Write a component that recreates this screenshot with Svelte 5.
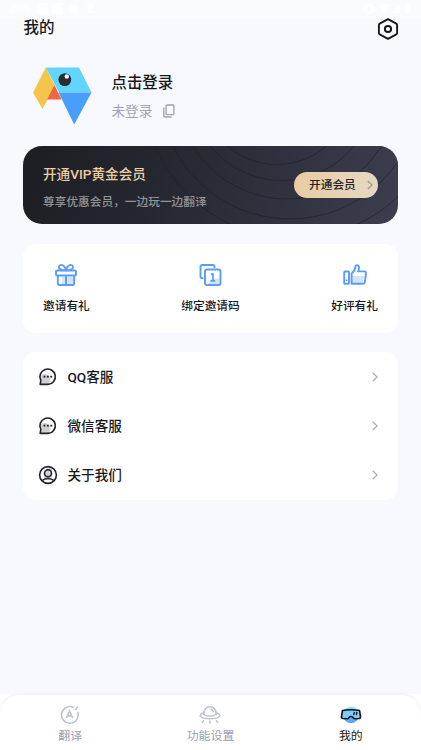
<script>
    const services = [
        { icon: "chat", label: "QQ客服" },
        { icon: "chat", label: "微信客服" },
        { icon: "user", label: "关于我们" },
    ];

    const rings = [
        [254, 76],
        [259, 92],
        [264, 110.5],
        [267, 130.5],
        [271, 150],
    ];
</script>

<div class="page">
    <div class="status">
        <span class="time">2:05</span>
        <i class="block"></i>
        <i class="block"></i>
        <svg class="small" width="8" height="8" viewBox="0 0 8 8">
            <path d="M1 1h6v6H1zM3 3h2v2H3z" fill="none" stroke="#fff" stroke-width="1.5" />
        </svg>
        <svg class="bug" width="11" height="11" viewBox="0 0 11 11">
            <path d="M1 2h8M2 5h8M5 0v10M2 8l7-5M3 9h6" fill="none" stroke="#fff" stroke-width="1.3" />
        </svg>
        <svg class="signals" width="49" height="12" viewBox="0 0 49 12">
            <rect x="3" y="2" width="6" height="8" rx="1" fill="none" stroke="#fff" stroke-width="1.5" />
            <path d="M.8 4v4M11.2 4v4" stroke="#fff" />
            <path d="M16 3q6-4 11 0l-5.500 7zM37 2v8h-9z" fill="#fff" />
            <rect x="42" y="1.500" width="5" height="9" rx="1" fill="#fff" />
        </svg>
    </div>

    <header>
        <h1>我的</h1>
        <svg width="22" height="22" viewBox="0 0 22 22" fill="none" stroke="#17181c">
            <path d="M11 1.200 19.300 5.600Q20.100 6 20.100 7v8q0 1-.8 1.400L11 20.800 2.700 16.400Q1.900 16 1.900 15V7q0-1 .8-1.400z" stroke-width="1.900" stroke-linejoin="round" />
            <circle cx="11" cy="11" r="3.100" stroke-width="2" />
        </svg>
    </header>

    <section class="profile">
        <svg width="60" height="58" viewBox="0 0 60 58">
            <path d="M12.800 .500 22 19 9.500 42 0 25.500z" fill="#f5c54b" />
            <path d="M21.500 18 28.500 32.500H14z" fill="#f0673f" />
            <path d="M12.800 .500H46L58.500 25.500H26z" fill="#61d5fd" />
            <path d="M25.500 25.500H58.500L41.200 57.500z" fill="#489ff9" />
            <circle cx="31.800" cy="12.600" r="6.400" fill="#292b2f" />
            <circle cx="33.800" cy="9.500" r="2.200" fill="#fff" />
        </svg>
        <div class="account">
            <p class="name">点击登录</p>
            <p class="state">
                未登录
                <svg width="12" height="14" viewBox="0 0 12 14" fill="none" stroke="#9da1b3" stroke-width="1.300">
                    <rect x="3.100" y="1" width="7.800" height="9.700" rx=".7" />
                    <path d="M.8 3.500v8.700q0 .8.8.8h7" />
                </svg>
            </p>
        </div>
    </section>

    <section class="vip">
        <svg class="rings" width="375" height="78" viewBox="0 0 375 78" fill="none">
            {#each rings as [cx, r]}
                <circle {cx} cy="-57.500" {r} stroke="#20222a" stroke-opacity=".7" />
            {/each}
        </svg>
        <div class="offer">
            <p class="vip-title">开通VIP黄金会员</p>
            <p class="vip-text">尊享优惠会员，一边玩一边翻译</p>
        </div>
        <button>
            <span>开通会员</span>
            <svg width="6" height="10" viewBox="0 0 6 10">
                <path d="m.8 1 4.200 4-4.200 4" fill="none" stroke="#a79a86" stroke-width="1.300" />
            </svg>
        </button>
    </section>

    <section class="actions">
        <div class="action">
            <svg width="24" height="24" viewBox="0 0 24 24" fill="none" stroke="#5a9cf8" stroke-width="1.900" stroke-linejoin="round">
                <path d="M8 14h12v7H8z" fill="#d3e4fe" stroke="none" />
                <rect x="2" y="7.500" width="20" height="5" rx="1.300" />
                <path d="M3.800 13v7.300q0 1.700 1.700 1.700h13q1.700 0 1.700-1.700V13M12 13v9" />
                <path d="M12 7.300C8.200 7.500 4.700 6.500 5 4c.3-3.300 5.700-3 7 3.300 1.300-6.300 6.700-6.600 7-3.300.2 2.500-3.200 3.500-7 3.300z" />
            </svg>
            <span>邀请有礼</span>
        </div>
        <div class="action">
            <svg width="24" height="24" viewBox="0 0 24 24" fill="none" stroke="#5a9cf8" stroke-width="1.900" stroke-linejoin="round">
                <path d="M16.500 5V3.800Q16.500 2 14.700 2H4.300Q2.500 2 2.500 3.800v9.700q0 1.800 1.800 1.800H5.500" />
                <path d="M14 15.500h7.500V22H9z" fill="#d3e4fe" stroke="none" />
                <rect x="7" y="6.500" width="15.500" height="15.500" rx="1.800" />
                <path d="M12.800 11.500 15 10.800v7M12.500 17.800h4.700" stroke-width="1.700" />
            </svg>
            <span>绑定邀请码</span>
        </div>
        <div class="action">
            <svg width="24" height="24" viewBox="0 0 24 24" fill="none" stroke="#5a9cf8" stroke-width="1.900" stroke-linejoin="round">
                <path d="M9 13h12l-1 7H9z" fill="#d3e4fe" stroke="none" />
                <rect x="1.200" y="8.500" width="4.800" height="12.300" rx=".8" />
                <path d="M8.600 20.800V10.500c2.200-1.500 3.500-4 3.700-6.500.2-2 2-2.200 3.100-1.200 1.200 1.200.5 3.700-.3 5.600h6.200q1.900 0 1.700 1.800l-1.100 8.800q-.2 1.800-2 1.800z" />
                <path d="M3.600 16.500v1.500" />
            </svg>
            <span>好评有礼</span>
        </div>
    </section>

    <section class="services">
        {#each services as service}
            <div class="service">
                {#if service.icon == "chat"}
                    <svg width="20" height="20" viewBox="0 0 20 20">
                        <path d="M3 8.500C7 5 12 8 12.500 12c.2 2-1 4-2.500 5H3z" fill="#cfd0d3" />
                        <path d="M2.200 17.400 2.800 13.300A7.700 7.700 0 1 1 10 17.400z" fill="none" stroke="#222428" stroke-width="1.600" stroke-linejoin="round" />
                        <path d="M5.500 9.700h1.900M8.900 9.700h1.900M12.300 9.700h1.900" stroke="#222428" stroke-width="1.700" />
                    </svg>
                {:else}
                    <svg width="20" height="20" viewBox="0 0 20 20" fill="none" stroke="#222428" stroke-width="1.600">
                        <path d="M9 3h5v9l-3 3H6V9z" fill="#d2d3d5" stroke="none" />
                        <circle cx="10" cy="10" r="8.400" />
                        <circle cx="10" cy="8.300" r="3.500" />
                        <path d="M4 15.800c2.500-3 9.500-3 12 0" />
                    </svg>
                {/if}
                <span>{service.label}</span>
                <svg class="arrow" width="6" height="10" viewBox="0 0 6 10">
                    <path d="m.7.800 4.400 4.200-4.400 4.200" fill="none" stroke="#aaabad" stroke-width="1.200" />
                </svg>
            </div>
        {/each}
    </section>

    <div class="dock">
        <nav>
            <div class="tab">
                <svg width="22" height="20" viewBox="0 0 22 20" fill="none" stroke="#bfc3ce" stroke-width="1.600">
                    <path d="M14.800 2.600A8.300 8.300 0 1 0 18.600 6.900" />
                    <path d="m16.200 4.900 2.700-3.500" />
                    <path d="m7.300 13 3.200-7 3.200 7M8.500 10.900h4" />
                </svg>
                <span>翻译</span>
            </div>
            <div class="tab">
                <svg width="22" height="20" viewBox="0 0 22 20" fill="none" stroke="#bfc3ce" stroke-width="1.500" stroke-linecap="round">
                    <path d="M4.700 9.300C4.500-.8 17.500-.8 17.300 9.300c-3 2.200-9.600 2.200-12.600 0z" />
                    <path d="M4.500 7.700C-1 10.200 0 13.700 11 13.700s12-3.500 6.500-6M12 4.200q2 .6 2.300 2.500M4.500 15.700l-1 1.700M11 16v2.200M17.500 15.700l1 1.700" />
                </svg>
                <span>功能设置</span>
            </div>
            <div class="tab active">
                <svg width="22" height="20" viewBox="0 0 22 20">
                    <defs>
                        <linearGradient id="visor" x1="0" y1="0" x2="0" y2="1">
                            <stop offset="0" stop-color="#83e7fb" />
                            <stop offset="1" stop-color="#559dff" />
                        </linearGradient>
                    </defs>
                    <circle cx="11" cy="10" r="8.300" fill="url(#visor)" />
                    <path d="M2.500 5.500q8.500-1.400 17 0l1 5.800q.2 2-1.500 2.200l-4.400.2q-1 0-1.500-1.200-2-2-4 0-.6 1.200-1.600 1.200L3 13.500q-1.700-.2-1.500-2.200z" fill="#84cafd" stroke="#101216" stroke-width="1.600" stroke-linejoin="round" />
                    <path d="m14.500 7-1 3M17 7l-.8 3" stroke="#101216" stroke-width="1.300" />
                </svg>
                <span>我的</span>
            </div>
        </nav>
    </div>
</div>

<style>
    :global(body) {
        margin: 0;
    }

    .page {
        box-sizing: border-box;
        height: 750px;
        display: flex;
        flex-direction: column;
        overflow: hidden;
        background: #f8f9fe;
        color: #17181c;
        font-family: Roboto, "Noto Sans CJK SC", sans-serif;
        font-weight: 500;
    }

    p,
    h1 {
        margin: 0;
    }

    svg {
        display: block;
        flex: none;
    }

    .status {
        height: 17px;
        display: flex;
        align-items: center;
        padding: 0 9px 0 10px;
        background: #fafbfd;
        color: #fff;
        font-size: 10px;
    }

    .time {
        width: 27px;
    }

    .block {
        width: 11px;
        height: 11px;
        margin-right: 4px;
        border-radius: 2px;
        background: #fff;
    }

    .small {
        margin-left: 3px;
    }

    .bug {
        margin-left: 7px;
    }

    .signals {
        margin-left: auto;
    }

    header {
        height: 22px;
        display: flex;
        align-items: center;
        justify-content: space-between;
        padding: 1px 22px 0 23.5px;
    }

    h1 {
        margin-bottom: 2px;
        font-size: 15.5px;
        font-weight: 500;
        line-height: 20px;
    }

    .profile {
        display: flex;
        height: 58px;
        margin: 27px 23px 0 33px;
    }

    .account {
        margin-left: 18.5px;
    }

    .name {
        margin-top: 5px;
        font-size: 15.400px;
        line-height: 22px;
    }

    .state {
        display: flex;
        align-items: center;
        gap: 11px;
        margin-top: 7px;
        color: #9da1b3;
        font-size: 13.600px;
        font-weight: 400;
        line-height: 20px;
    }

    .vip {
        position: relative;
        box-sizing: border-box;
        height: 78px;
        display: flex;
        align-items: center;
        justify-content: space-between;
        margin: 21px 23px 0;
        padding: 0 20px;
        border-radius: 19px;
        overflow: hidden;
        background: linear-gradient(105deg, #1c1e22, #292b36 50%, #3c3e4e);
    }

    .rings {
        position: absolute;
        top: 0;
        left: 0;
    }

    .offer {
        padding-top: 5px;
    }

    .vip-title {
        color: #e8cda5;
        font-size: 13.600px;
        line-height: 20px;
    }

    .vip-text {
        margin-top: 9px;
        color: #939497;
        font-size: 11.700px;
        line-height: 18px;
    }

    button {
        position: relative;
        height: 26px;
        width: 84px;
        display: flex;
        align-items: center;
        justify-content: space-between;
        padding: 0 5px 0 15px;
        border: 0;
        border-radius: 13px;
        background: linear-gradient(90deg, #e9cca2, #e4d8c4);
        color: #222326;
        font: inherit;
        font-size: 11.700px;
    }

    button span {
        padding-bottom: 3px;
    }

    .actions {
        box-sizing: border-box;
        height: 89px;
        display: flex;
        justify-content: space-between;
        margin: 20px 23px 0;
        padding: 19px 20px 0;
        border-radius: 13px;
        background: #fff;
    }

    .action {
        display: flex;
        flex-direction: column;
        align-items: center;
        gap: 10px;
        font-size: 11.700px;
        line-height: 18px;
    }

    .services {
        height: 148px;
        margin: 19px 23px 0;
        border-radius: 13px;
        background: #fff;
    }

    .service {
        height: 49px;
        display: flex;
        align-items: center;
        padding: 0 20px 0 15px;
        font-size: 13.600px;
    }

    .service span {
        margin-left: 9.5px;
        padding-bottom: 1px;
    }

    .arrow {
        margin-left: auto;
    }

    .dock {
        margin-top: auto;
        background: #fff;
    }

    nav {
        height: 55px;
        display: grid;
        grid-template-columns: repeat(3, 1fr);
        border-top: 1px solid #f3f4f8;
        border-radius: 20px 20px 0 0;
        background: #fff;
        box-shadow: 0 0 3px #e9eaf0;
    }

    .tab {
        display: flex;
        flex-direction: column;
        align-items: center;
        gap: 1px;
        padding-top: 10px;
        color: #9b9fb0;
        font-size: 11.900px;
        font-weight: 400;
        line-height: 20px;
    }

    .tab.active {
        color: #17181c;
    }
</style>
